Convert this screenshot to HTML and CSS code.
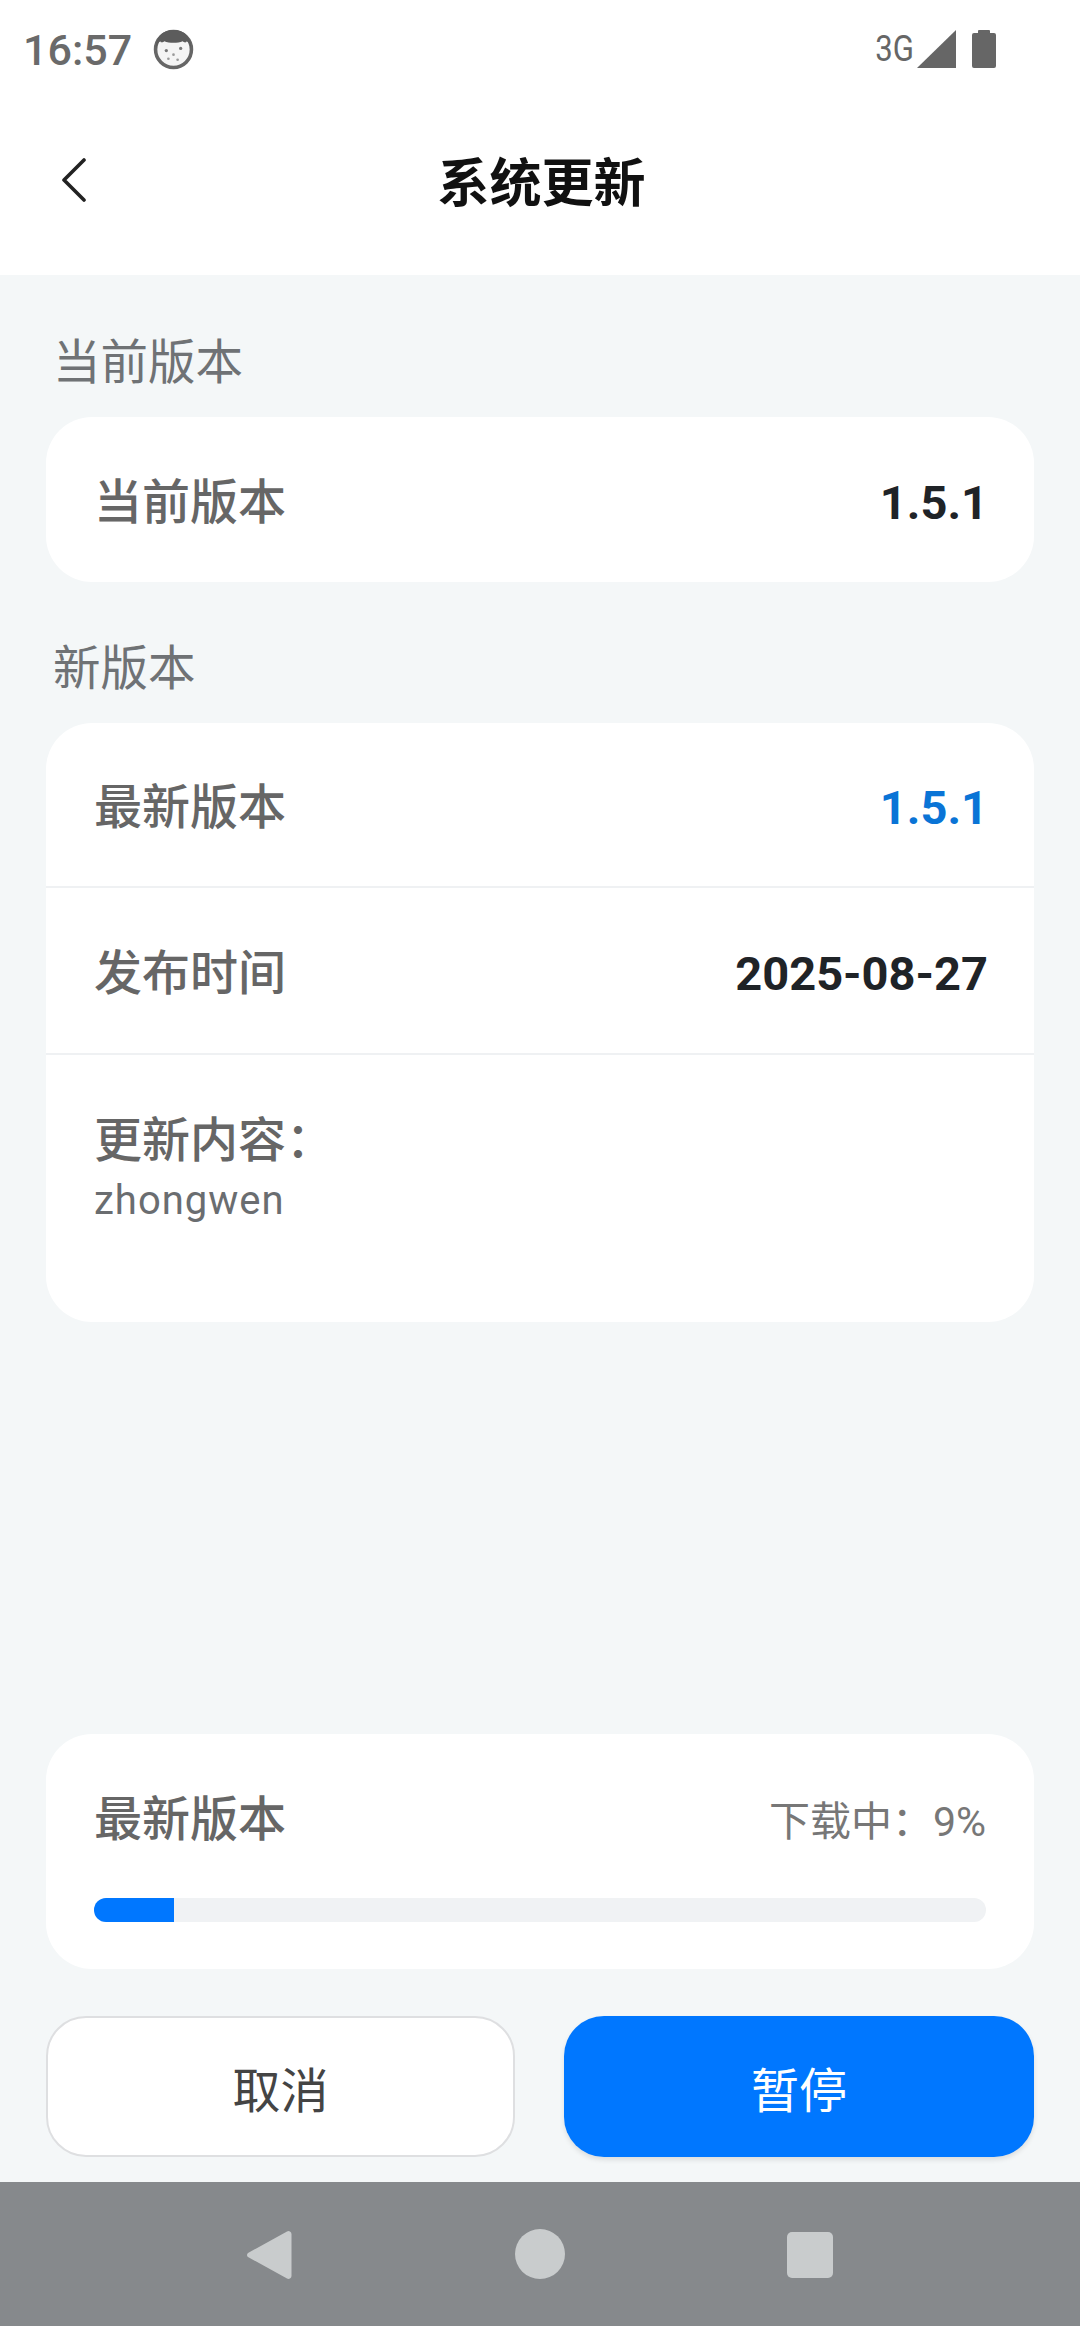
FILE: index.html
```html
<!DOCTYPE html>
<html lang="zh">
<head>
<meta charset="utf-8">
<title>系统更新</title>
<link rel="stylesheet" href="styles.css">
</head>
<body>
<div class="top">
  <div class="status">
    <div class="status-left">
      <span class="time">16:57</span>
      <svg class="face" viewBox="0 0 40 40">
        <circle cx="20" cy="20" r="17.5" fill="#f4f4f4" stroke="#666" stroke-width="3.5"/>
        <path d="M3 19C2 8 10 1 20 1s18 7 17 18c-1-3-2-6-4-7-1 2-3 1-4 0-5 2-13 2-18 0-1 1-3 2-4 0-2 1-3 4-4 7z" fill="#5c5c5c"/>
        <circle cx="13" cy="21" r="1.6" fill="#777"/>
        <circle cx="27" cy="19" r="1.6" fill="#777"/>
        <circle cx="20" cy="25" r="1.3" fill="#999"/>
        <circle cx="15" cy="29" r="1.3" fill="#999"/>
        <circle cx="24" cy="30" r="1.3" fill="#999"/>
      </svg>
    </div>
    <div class="status-right">
      <span class="net">3G</span>
      <svg class="signal" viewBox="0 0 39 38"><path d="M39 0V38H0Z" fill="#666"/></svg>
      <svg class="battery" viewBox="0 0 24 38"><path d="M7 0h10a1 1 0 0 1 1 1v2h4a2 2 0 0 1 2 2v31a2 2 0 0 1-2 2H2a2 2 0 0 1-2-2V5a2 2 0 0 1 2-2h4V1a1 1 0 0 1 1-1z" fill="#666"/></svg>
    </div>
  </div>
  <header class="title-bar">
    <svg class="back" viewBox="0 0 26 44"><path d="M23 2 3 22l20 20" fill="none" stroke="#222" stroke-width="3.6" stroke-linecap="round" stroke-linejoin="round"/></svg>
    <h1 class="title">系统更新</h1>
  </header>
</div>
<main class="content">
  <div class="section-label">当前版本</div>
  <section class="card">
    <div class="row"><span class="row-label">当前版本</span><span class="row-value">1.5.1</span></div>
  </section>
  <div class="section-label section-label-next">新版本</div>
  <section class="card">
    <div class="row row-line"><span class="row-label">最新版本</span><span class="row-value row-value-blue">1.5.1</span></div>
    <div class="row row-line row-tall"><span class="row-label">发布时间</span><span class="row-value">2025-08-27</span></div>
    <div class="notes">
      <div class="row-label">更新内容：</div>
      <div class="notes-text">zhongwen</div>
    </div>
  </section>
  <div class="spacer"></div>
  <section class="card progress-card">
    <div class="progress-head"><span class="row-label">最新版本</span><span class="progress-state">下载中：9%</span></div>
    <div class="track"><div class="fill" style="width:9%"></div></div>
  </section>
  <div class="actions">
    <button class="btn btn-cancel">取消</button>
    <button class="btn btn-pause">暂停</button>
  </div>
</main>
<nav class="nav">
  <svg class="nav-back" viewBox="0 0 46 50"><path d="M41 1.5a3 3 0 0 1 4.500 2.500v42a3 3 0 0 1-4.500 2.500L2 27a2.500 2.500 0 0 1 0-4z" fill="#c9cccd"/></svg>
  <span class="nav-home"></span>
  <span class="nav-recent"></span>
</nav>
</body>
</html>
```
FILE: styles.css
```css
* { box-sizing: border-box; }
html, body { margin: 0; padding: 0; }
body {
  width: 1080px;
  height: 2340px;
  display: flex;
  flex-direction: column;
  background: #fff;
  font-family: Roboto, "Noto Sans CJK SC", sans-serif;
  overflow: hidden;
}
.top { height: 275px; background: #fff; display: flex; flex-direction: column; }
.status {
  height: 98px;
  display: flex;
  justify-content: space-between;
  align-items: center;
  padding: 0 84px 0 23px;
}
.status-left, .status-right { display: flex; align-items: center; }
.time { font-size: 43px; font-weight: 500; color: #6a6a6a; line-height: 50px; padding-top: 2px; }
.face { width: 41px; height: 41px; margin-left: 21px; }
.net {
  font-size: 37px;
  color: #666;
  line-height: 44px;
  display: inline-block;
  transform: scaleX(.84);
  transform-origin: right center;
  margin-right: 3px;
}
.signal { width: 39px; height: 38px; }
.battery { width: 24px; height: 38px; margin-left: 16px; }
.title-bar {
  flex: 1;
  position: relative;
  display: flex;
  align-items: center;
  justify-content: center;
  padding: 0 0 3px 3px;
}
.back { position: absolute; left: 61px; top: 60px; width: 26px; height: 44px; }
.title { margin: 0; font-size: 52px; font-weight: 700; color: #111; line-height: 60px; }
.content {
  flex: 1;
  display: flex;
  flex-direction: column;
  background: #f4f7f8;
  padding: 59px 46px 25px;
}
.section-label {
  font-size: 47.5px;
  line-height: 58px;
  color: #6f7275;
  margin: 0 0 25px 7px;
}
.section-label-next { margin-top: 58px; margin-left: 7px; }
.card { background: #fff; border-radius: 46px; overflow: hidden; }
.row {
  height: 165px;
  display: flex;
  align-items: center;
  justify-content: space-between;
  padding: 6px 46px 0 48px;
}
.row-tall { height: 167px; }
.row-line { border-bottom: 2px solid #eff1f3; }
.row-label { font-size: 48px; font-weight: 500; color: #666; line-height: 58px; }
.row-value { font-size: 47px; font-weight: 700; color: #1f2327; }
.row-value-blue { color: #0a74d6; }
.notes { height: 267px; padding: 57px 48px 0; }
.notes-text { font-size: 40px; line-height: 52px; color: #6a6d70; letter-spacing: 1px; margin-top: 5px; }
.spacer { flex: 1; }
.progress-card { height: 235px; padding: 57px 48px 0; }
.progress-head { display: flex; justify-content: space-between; align-items: center; }
.progress-state { font-size: 41px; color: #777; margin-top: -4px; }
.track { height: 24px; margin-top: 49px; background: #f0f2f4; border-radius: 12px; overflow: hidden; }
.fill { height: 100%; background: #0077ff; }
.actions { display: flex; justify-content: space-between; margin-top: 47px; }
.btn {
  height: 141px;
  border-radius: 40px;
  font-family: inherit;
  font-size: 48px;
  padding: 0;
}
.btn-cancel { width: 469px; background: #fff; border: 2px solid #dedfe1; color: #444; }
.btn-pause { width: 470px; background: #0077ff; border: 0; color: #fff; box-shadow: 0 3px 5px rgba(0,0,0,.1); }
.nav {
  height: 144px;
  margin-bottom: 14px;
  background: #86898c;
  position: relative;
  display: flex;
  align-items: center;
  justify-content: center;
  flex-shrink: 0;
}
.nav-back { position: absolute; left: 246px; top: 48px; width: 46px; height: 50px; }
.nav-home { width: 50px; height: 50px; border-radius: 50%; background: #c9cccd; }
.nav-recent { position: absolute; left: 787px; top: 50px; width: 46px; height: 46px; border-radius: 5px; background: #c9cccd; }
```
